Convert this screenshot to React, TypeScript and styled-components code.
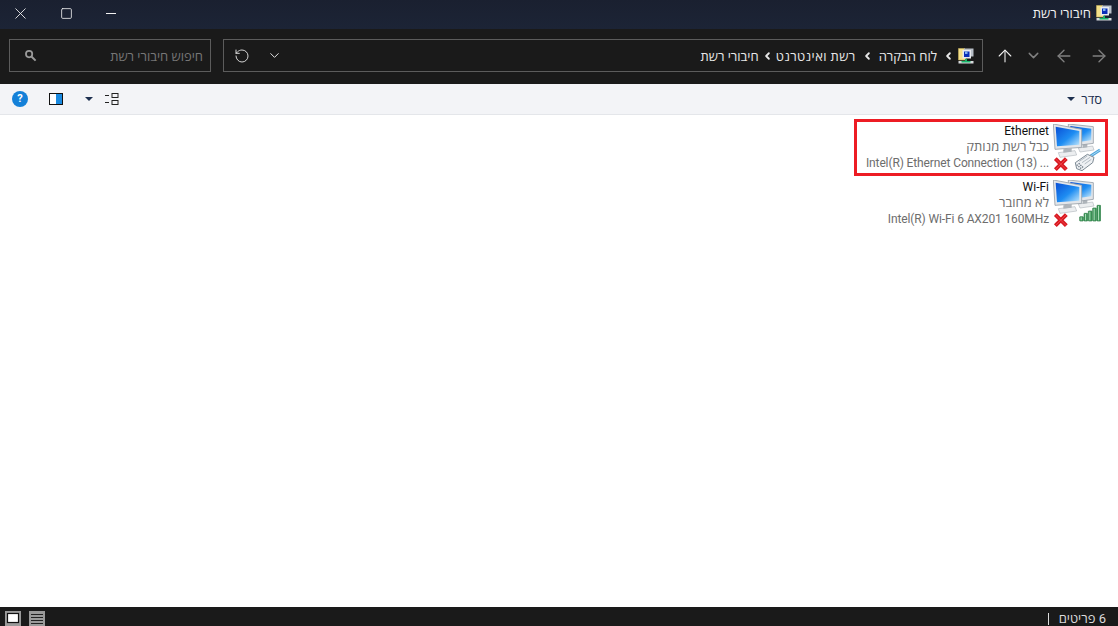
import React from 'react';
import styled, { createGlobalStyle } from 'styled-components';
import { ArrowLeft, ArrowRight, ArrowUp, ChevronDown, ChevronLeft, RotateCw, Square, X } from 'lucide-react';

const FolderNetIcon = () => (
  <svg width="16" height="16" viewBox="0 0 16 16">
    <path d="M0.5 0.5h6l1 1.5v10h-7z" fill="#f4e08a" stroke="#c9b25a" strokeWidth="0.6" />
    <rect x="6" y="0.5" width="9.5" height="8" fill="#b9c0c8" />
    <rect x="4.5" y="2" width="8.5" height="8.5" fill="#e8eaee" />
    <rect x="6" y="3.5" width="5.5" height="5.5" fill="#0a2fb8" />
    <rect x="7" y="3.5" width="2.5" height="2.5" fill="#7fb0f0" />
    <rect x="7" y="11" width="2" height="2" fill="#19b56a" />
    <rect x="0.5" y="13" width="15" height="2.5" fill="#d8dadd" />
    <rect x="3.5" y="13" width="9" height="1.5" fill="#19b56a" />
  </svg>
);

// coordinates below are in 3x reference pixels, viewBox maps them back to 48x48
const Monitor = ({ id, frame, screen, stand, base }: { id: string; frame: string; screen: string; stand: string; base: string }) => (
  <g>
    <polygon points={base} fill="#eceef0" stroke="#b4b9bf" strokeWidth="2" />
    <polygon points={stand} fill="#aeb4ba" />
    <polygon points={frame} fill="#e3e6ea" stroke="#98a0a8" strokeWidth="2.5" strokeLinejoin="round" />
    <polygon points={screen} fill={`url(#${id})`} />
  </g>
);

const NetworkIcon = ({ id, children }: { id: string; children: React.ReactNode }) => (
  <IconSvg viewBox="9 12 144 144">
    <defs>
      <linearGradient id={id} x1="0" y1="0" x2="1" y2="1">
        <stop offset="0" stopColor="#0a4fd6" />
        <stop offset="0.55" stopColor="#1e8df2" />
        <stop offset="1" stopColor="#c4e8fb" />
      </linearGradient>
    </defs>
    <Monitor
      id={id}
      frame="55,12 130,20 130,70 92,75 55,70"
      screen="61,18 124,26 124,61 92,65 61,62"
      stand="98,72 112,70 112,82 98,84"
      base="85,84 128,78 132,90 90,96"
    />
    <Monitor
      id={id}
      frame="10,12 95,28 95,82 15,88"
      screen="17,20 88,33 88,74 21,79"
      stand="40,88 65,85 65,95 40,98"
      base="25,98 75,92 80,105 30,112"
    />
    <path d="M16 116 L49 149 M49 116 L16 149" stroke="#d81a22" strokeWidth="12" />
    <path d="M17 117 L48 148 M48 117 L17 148" stroke="#ee4046" strokeWidth="3" />
    {children}
  </IconSvg>
);

const Plug = () => (
  <g>
    <path d="M122 108 L150 90" stroke="#4fa4da" strokeWidth="9" />
    <path d="M122 108 L150 90" stroke="#a9dbf5" strokeWidth="3" />
    <path d="M76 128 L112 103 L132 112 L128 128 L96 152 L80 146 Z" fill="#eef1f4" stroke="#7d8a94" strokeWidth="3" strokeLinejoin="round" />
    <path d="M88 124 L112 108 M96 128 L120 112 M104 132 L124 118" stroke="#b4bdc4" strokeWidth="3" />
    <path d="M80 134 L96 148 M86 130 L101 144" stroke="#6b7884" strokeWidth="4" strokeDasharray="4 3" />
  </g>
);

const Bars = () => (
  <g>
    {[122, 112, 105, 96, 88].map((top, i) => (
      <g key={top}>
        <rect x={89 + i * 13} y={top} width="11" height={135 - top} rx="1.5" fill="#3f9a5c" stroke="#2c7a44" strokeWidth="2" />
        <rect x={92 + i * 13} y={top + 2} width="3" height={131 - top} fill="#a9dcb6" />
      </g>
    ))}
  </g>
);

const App = () => {
  return (
    <Page>
      <GlobalStyle />
      <TitleBar>
        <WindowButtons>
          <WindowButton><X size={19} strokeWidth={1.1} /></WindowButton>
          <WindowButton><Square size={13} strokeWidth={1.5} /></WindowButton>
          <WindowButton><MinusBar /></WindowButton>
        </WindowButtons>
        <WindowTitle>
          <span dir="rtl">חיבורי רשת</span>
          <FolderNetIcon />
        </WindowTitle>
      </TitleBar>

      <NavBar>
        <SearchBox>
          <SearchGlyph viewBox="0 0 14 14">
            <circle cx="5.5" cy="5.5" r="3.4" fill="none" stroke="#9a9a9a" strokeWidth="1.9" />
            <path d="M8 8 L12.5 12.5" stroke="#9a9a9a" strokeWidth="2.2" />
          </SearchGlyph>
          <SearchHint dir="rtl">חיפוש חיבורי רשת</SearchHint>
        </SearchBox>
        <AddressBox>
          <AddressTools>
            <RotateCw size={16} strokeWidth={1.4} color="#e2e2e2" style={{ transform: 'scaleX(-1)' }} />
            <ChevronDown size={15} strokeWidth={1.6} color="#e2e2e2" />
          </AddressTools>
          <Crumbs>
            <Crumb dir="rtl">חיבורי רשת</Crumb>
            <CrumbArrow $tight><ChevronLeft size={12} strokeWidth={4} /></CrumbArrow>
            <WideCrumb dir="rtl">רשת ואינטרנט</WideCrumb>
            <CrumbArrow><ChevronLeft size={12} strokeWidth={4} /></CrumbArrow>
            <Crumb dir="rtl">לוח הבקרה</Crumb>
            <CrumbArrow><ChevronLeft size={12} strokeWidth={4} /></CrumbArrow>
            <FolderNetIcon />
          </Crumbs>
        </AddressBox>
        <NavButtons>
          <NavSlot $width={28}><ArrowUp size={20} strokeWidth={1.3} color="#f0f0f0" /></NavSlot>
          <NavSlot $width={28}><ChevronDown size={17} strokeWidth={2} color="#808080" /></NavSlot>
          <NavSlot $width={34}><ArrowLeft size={20} strokeWidth={1.6} color="#808080" /></NavSlot>
          <NavSlot $width={35}><ArrowRight size={20} strokeWidth={1.6} color="#808080" /></NavSlot>
        </NavButtons>
      </NavBar>

      <ToolBar>
        <ToolGroup>
          <HelpBadge>?</HelpBadge>
          <PaneGlyph />
          <PaneCaret />
          <LayoutGlyph viewBox="0 0 14 14">
            <path d="M0 2.5h4M0 9.5h4" stroke="#222" strokeWidth="1" />
            <rect x="7" y="0.5" width="6" height="4" fill="none" stroke="#222" />
            <rect x="7" y="7.5" width="6" height="4" fill="none" stroke="#222" />
          </LayoutGlyph>
        </ToolGroup>
        <Organize>
          <Caret />
          <span dir="rtl">סדר</span>
        </Organize>
      </ToolBar>

      <Content>
        <Item $selected>
          <ItemText>
            <ItemName>Ethernet</ItemName>
            <HebrewLine dir="rtl">כבל רשת מנותק</HebrewLine>
            <ItemLine>Intel(R) Ethernet Connection (13) ...</ItemLine>
          </ItemText>
          <NetworkIcon id="screenA"><Plug /></NetworkIcon>
        </Item>
        <Item>
          <ItemText>
            <ItemName>Wi-Fi</ItemName>
            <HebrewLine dir="rtl">לא מחובר</HebrewLine>
            <ItemLine>Intel(R) Wi-Fi 6 AX201 160MHz</ItemLine>
          </ItemText>
          <NetworkIcon id="screenB"><Bars /></NetworkIcon>
        </Item>
      </Content>

      <StatusBar>
        <ViewButtons>
          <ViewButton>
            <svg width="14" height="14" viewBox="0 0 14 14">
              <rect x="1.5" y="1.5" width="11" height="9" fill="#fff" stroke="#111" strokeWidth="1.2" />
            </svg>
          </ViewButton>
          <ViewButton>
            <svg width="14" height="14" viewBox="0 0 14 14">
              <path d="M1 2.5h12M1 5.5h12M1 8.5h12M1 11.5h12" stroke="#222" strokeWidth="1.2" />
            </svg>
          </ViewButton>
        </ViewButtons>
        <StatusText>
          <StatusDivider />
          <span dir="rtl">6 פריטים</span>
        </StatusText>
      </StatusBar>
    </Page>
  );
};

export default App;

const GlobalStyle = createGlobalStyle`
  html, body, #root {
    margin: 0;
    height: 100%;
    overflow: hidden;
  }
  body {
    font-family: Roboto, "Open Sans", "Liberation Sans", sans-serif;
    font-size: 13px;
  }
`;

const Page = styled.div`
  display: flex;
  flex-direction: column;
  width: 1118px;
  height: 626px;
  background: #fff;
`;

const TitleBar = styled.div`
  flex: 0 0 29px;
  box-sizing: border-box;
  display: flex;
  justify-content: space-between;
  align-items: center;
  padding: 0 6px 3px 0;
  background: linear-gradient(180deg, #1a2030 0%, #1c2436 100%);
  color: #f2f2f2;
`;

const WindowButtons = styled.div`
  display: flex;
  align-items: center;
  margin-left: -3px;
`;

const WindowButton = styled.div`
  width: 46px;
  display: flex;
  justify-content: center;
  align-items: center;
  color: #f2f2f2;
`;

const MinusBar = styled.span`
  width: 10px;
  height: 1px;
  margin-right: 2px;
  background: #f2f2f2;
`;

const WindowTitle = styled.div`
  display: flex;
  align-items: center;
  gap: 5px;
`;

const NavBar = styled.div`
  flex: 0 0 55px;
  box-sizing: border-box;
  display: flex;
  align-items: center;
  padding: 0 0 2px 9px;
  background: #1a1a1a;
`;

const InputBox = styled.div`
  height: 33px;
  box-sizing: border-box;
  display: flex;
  align-items: center;
  justify-content: space-between;
  border: 1px solid #5c5c5c;
`;

const SearchBox = styled(InputBox)`
  width: 202px;
  padding: 0 7px 0 14px;
`;

const SearchGlyph = styled.svg`
  width: 13px;
  height: 13px;
`;

const SearchHint = styled.span`
  color: #767676;
`;

const AddressBox = styled(InputBox)`
  width: 760px;
  margin-left: 12px;
  padding: 0 8px 0 10px;
`;

const AddressTools = styled.div`
  display: flex;
  align-items: center;
  gap: 17px;
`;

const Crumbs = styled.div`
  display: flex;
  align-items: center;
  gap: 4px;
`;

const Crumb = styled.span`
  color: #e8e8e8;
  margin: 0 2px;
`;

const WideCrumb = styled(Crumb)`
  letter-spacing: 0.4px;
`;

const CrumbArrow = styled.span<{ $tight?: boolean }>`
  display: flex;
  justify-content: center;
  width: 11px;
  margin: 0 ${(p) => (p.$tight ? -3 : 0)}px;
  color: #e8e8e8;
`;

const NavButtons = styled.div`
  display: flex;
  align-items: center;
  margin-left: 8px;
`;

const NavSlot = styled.div<{ $width: number }>`
  width: ${(p) => p.$width}px;
  display: flex;
  justify-content: center;
`;

const ToolBar = styled.div`
  flex: 0 0 31px;
  box-sizing: border-box;
  display: flex;
  align-items: center;
  justify-content: space-between;
  padding: 0 16px 0 12px;
  background: #f3f4f7;
  border-bottom: 1px solid #e4e6ea;
  color: #1e3050;
`;

const ToolGroup = styled.div`
  display: flex;
  align-items: center;
`;

const HelpBadge = styled.div`
  width: 16px;
  height: 16px;
  border-radius: 50%;
  background: #1480d8;
  color: #fff;
  font-size: 11px;
  font-weight: 700;
  line-height: 16px;
  text-align: center;
`;

const PaneGlyph = styled.div`
  width: 14px;
  height: 12px;
  margin-left: 21px;
  box-sizing: border-box;
  border: 1px solid #111;
  background: linear-gradient(90deg, #fff 50%, #1a8ae0 50%);
`;

const Caret = styled.span`
  width: 0;
  height: 0;
  border-left: 4px solid transparent;
  border-right: 4px solid transparent;
  border-top: 4px solid #1e3050;
`;

const PaneCaret = styled(Caret)`
  margin-left: 22px;
`;

const LayoutGlyph = styled.svg`
  width: 14px;
  height: 14px;
  margin: 1px 0 0 12px;
`;

const Organize = styled.div`
  display: flex;
  align-items: center;
  gap: 6px;
`;

const Content = styled.div`
  flex: 1;
  display: flex;
  flex-direction: column;
  align-items: flex-end;
  padding: 4px 10px 0 0;
`;

const Item = styled.div<{ $selected?: boolean }>`
  display: flex;
  align-items: flex-start;
  justify-content: flex-end;
  gap: 4px;
  width: 254px;
  height: ${(p) => (p.$selected ? 57 : 56)}px;
  margin-top: ${(p) => (p.$selected ? 0 : -1)}px;
  box-sizing: border-box;
  padding-right: 4px;
  border: 3px solid ${(p) => (p.$selected ? '#ed1c24' : 'transparent')};
  white-space: nowrap;
`;

const IconSvg = styled.svg`
  flex: none;
  width: 48px;
  height: 48px;
  margin-top: 2px;
`;

const ItemText = styled.div`
  display: flex;
  flex-direction: column;
  align-items: flex-end;
  padding-top: 1px;
  line-height: 16px;
`;

const ItemName = styled.div`
  color: #111;
  font-size: 12px;
`;

const ItemLine = styled.div`
  color: #6d6d6d;
  font-size: 12px;
  letter-spacing: -0.12px;
`;

const HebrewLine = styled(ItemLine)`
  font-size: 13px;
  letter-spacing: 0;
`;

const StatusBar = styled.div`
  flex: 0 0 19px;
  box-sizing: border-box;
  display: flex;
  align-items: flex-start;
  justify-content: space-between;
  padding: 4px 12px 0 5px;
  overflow: hidden;
  background: #1a1a1a;
  color: #dcdcdc;
`;

const ViewButtons = styled.div`
  display: flex;
  gap: 8px;
`;

const ViewButton = styled.div`
  width: 16px;
  height: 16px;
  display: flex;
  align-items: center;
  justify-content: center;
  background: #9a9a9a;
`;

const StatusText = styled.div`
  display: flex;
  align-items: center;
  gap: 10px;
  line-height: 16px;
`;

const StatusDivider = styled.span`
  width: 1px;
  height: 12px;
  background: #dcdcdc;
`;
